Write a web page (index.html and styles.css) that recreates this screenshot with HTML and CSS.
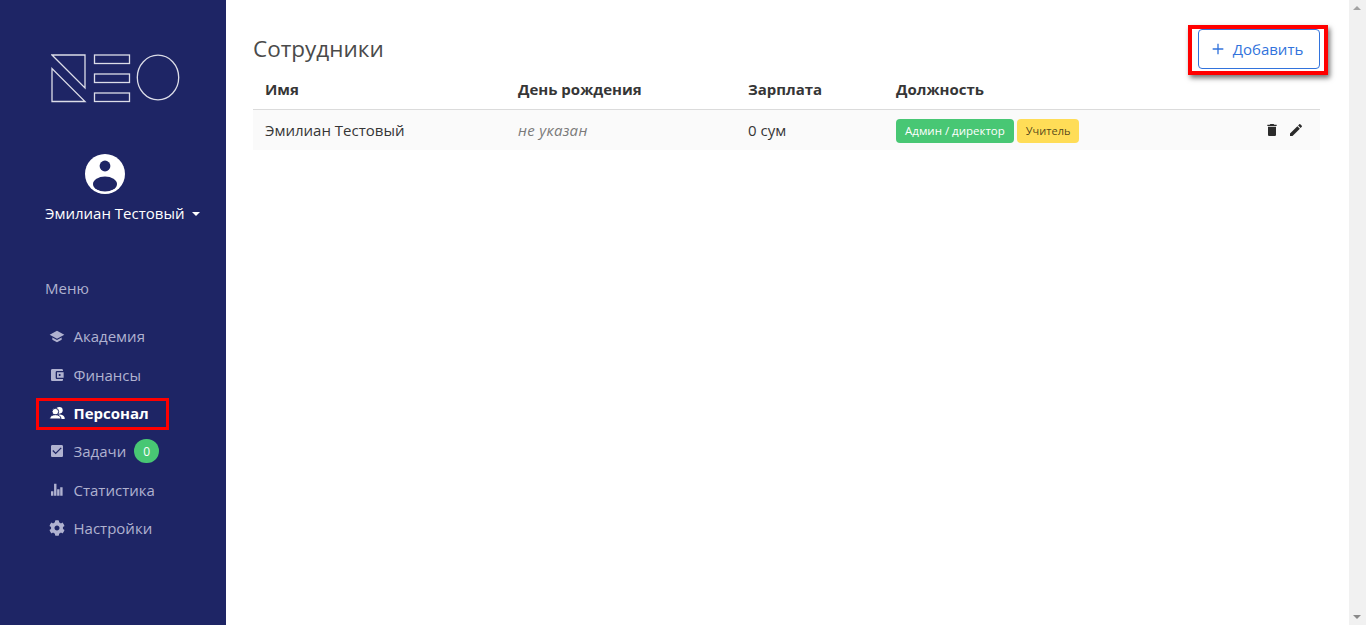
FILE: index.html
```html
<!DOCTYPE html>
<html lang="ru">
<head>
<meta charset="utf-8">
<title>Сотрудники</title>
<link rel="stylesheet" href="styles.css">
</head>
<body>
<div class="app">
  <aside class="sidebar">
    <svg class="logo" width="130" height="50" viewBox="0 0 130 50" fill="none" stroke="currentColor" stroke-width="1.3">
      <path d="M1 1H34V34Z"/>
      <path d="M1 14.5V47.5H34Z"/>
      <rect x="43.5" y="1" width="35" height="8.5"/>
      <rect x="43.5" y="20" width="35" height="8.5"/>
      <rect x="43.5" y="39" width="35" height="8.5"/>
      <ellipse cx="107" cy="23.5" rx="20.7" ry="22.3"/>
    </svg>
    <svg class="avatar" width="40" height="40" viewBox="0 0 40 40">
      <circle cx="20" cy="20" r="20" fill="#fff"/>
      <circle cx="20" cy="12" r="5.4" fill="#1e2565"/>
      <ellipse cx="20" cy="30" rx="12" ry="7.5" fill="#1e2565"/>
    </svg>
    <div class="user">Эмилиан Тестовый<span class="caret"></span></div>
    <div class="menu-label">Меню</div>
    <nav class="menu">
      <a class="menu-item">
        <svg class="menu-icon" viewBox="0 0 24 24"><path d="M12 4L1 10l11 6 11-6-11-6zM5 14.2v3.6L12 21.5l7-3.7v-3.6L12 18l-7-3.8z"/></svg>
        Академия
      </a>
      <a class="menu-item">
        <svg class="menu-icon" viewBox="0 0 24 24"><path d="M21 18v1c0 1.1-.9 2-2 2H5c-1.11 0-2-.9-2-2V5c0-1.1.89-2 2-2h14c1.1 0 2 .9 2 2v1h-9c-1.11 0-2 .9-2 2v8c0 1.1.89 2 2 2h9zm-9-2h10V8H12v8zm4-2.5c-.83 0-1.5-.67-1.5-1.5s.67-1.5 1.5-1.5 1.5.67 1.5 1.5-.67 1.5-1.5 1.5z"/></svg>
        Финансы
      </a>
      <a class="menu-item is-active">
        <svg class="menu-icon" viewBox="0 0 24 24">
          <circle cx="15.500" cy="8" r="5"/>
          <path d="M14 14.500c4.500-.5 9.500 1.500 9.500 5.500v1H16z"/>
          <circle class="cut" cx="9.500" cy="10" r="5"/>
          <path class="cut" d="M1 21c0-4.500 4-6.500 8.500-6.500S18 16.500 18 21z"/>
        </svg>
        Персонал
      </a>
      <a class="menu-item">
        <svg class="menu-icon" viewBox="0 0 24 24"><path d="M19 3H5c-1.11 0-2 .9-2 2v14c0 1.1.89 2 2 2h14c1.110 0 2-.9 2-2V5c0-1.100-.89-2-2-2zm-9 14l-5-5 1.410-1.410L10 14.170l7.590-7.590L19 8l-9 9z"/></svg>
        Задачи
        <span class="count">0</span>
      </a>
      <a class="menu-item">
        <svg class="menu-icon" viewBox="0 0 24 24"><path d="M3 14h3.600v6.500H3zM7.600 2.500h3.600v18H7.600zM12.200 11h3.600v9.500h-3.600zM16.800 8h3.600v12.500h-3.600z"/></svg>
        Статистика
      </a>
      <a class="menu-item">
        <svg class="menu-icon" viewBox="0 0 512 512"><path d="M487.4 315.7l-42.6-24.6c4.3-23.2 4.3-47 0-70.2l42.6-24.6c4.9-2.8 7.1-8.6 5.5-14-11.1-35.6-30-67.8-54.7-94.6-3.8-4.1-10-5.1-14.8-2.3L380.8 110c-17.9-15.4-38.5-27.3-60.8-35.1V25.8c0-5.6-3.9-10.5-9.4-11.7-36.7-8.2-74.3-7.8-109.2 0-5.5 1.2-9.4 6.1-9.4 11.7V75c-22.2 7.9-42.8 19.8-60.8 35.1L88.7 85.5c-4.9-2.8-11-1.9-14.8 2.3-24.7 26.7-43.6 58.9-54.7 94.6-1.7 5.4.6 11.2 5.5 14L67.3 221c-4.3 23.2-4.3 47 0 70.2l-42.6 24.6c-4.9 2.8-7.1 8.6-5.5 14 11.1 35.6 30 67.8 54.7 94.6 3.8 4.1 10 5.1 14.8 2.3l42.6-24.6c17.9 15.4 38.5 27.3 60.8 35.1v49.2c0 5.6 3.9 10.5 9.4 11.7 36.7 8.2 74.3 7.8 109.2 0 5.5-1.2 9.4-6.1 9.4-11.7v-49.2c22.2-7.9 42.8-19.8 60.8-35.1l42.6 24.6c4.9 2.8 11 1.9 14.8-2.3 24.7-26.7 43.6-58.9 54.7-94.6 1.5-5.5-.7-11.3-5.6-14.1zM256 336c-44.1 0-80-35.9-80-80s35.9-80 80-80 80 35.9 80 80-35.9 80-80 80z"/></svg>
        Настройки
      </a>
    </nav>
    <div class="mark mark-menu"></div>
  </aside>
  <main class="main">
    <header class="head">
      <h1 class="title">Сотрудники</h1>
      <button class="add">
        <svg class="add-icon" viewBox="0 0 24 24"><path d="M20 13h-7v7h-2v-7H4v-2h7V4h2v7h7v2z"/></svg>
        Добавить
      </button>
      <div class="mark mark-add"></div>
    </header>
    <table class="table">
      <colgroup>
        <col class="col-name"><col class="col-birth"><col class="col-pay"><col class="col-role"><col>
      </colgroup>
      <thead>
        <tr><th>Имя</th><th>День рождения</th><th>Зарплата</th><th>Должность</th><th></th></tr>
      </thead>
      <tbody>
        <tr>
          <td>Эмилиан Тестовый</td>
          <td class="muted">не указан</td>
          <td>0 сум</td>
          <td><div class="tags"><span class="tag tag-green">Админ / директор</span><span class="tag tag-yellow">Учитель</span></div></td>
          <td class="actions">
            <svg class="action" viewBox="0 0 24 24"><path d="M6 19c0 1.100.9 2 2 2h8c1.100 0 2-.9 2-2V7H6v12zM19 4h-3.500l-1-1h-5l-1 1H5v2h14V4z"/></svg>
            <svg class="action" viewBox="0 0 24 24"><path d="M3 17.250V21h3.750L17.810 9.940l-3.750-3.750L3 17.250zM20.710 7.040c.39-.39.39-1.020 0-1.410l-2.340-2.340c-.39-.39-1.020-.39-1.410 0l-1.830 1.830 3.750 3.750 1.830-1.830z"/></svg>
          </td>
        </tr>
      </tbody>
    </table>
  </main>
  <div class="scrollbar"><span class="arrow-up"></span><span class="arrow-down"></span></div>
</div>
</body>
</html>
```
FILE: styles.css
```css
* { box-sizing: border-box; }
html, body { margin: 0; height: 100%; overflow: hidden; }
body { font-family: "Open Sans", "Noto Sans", sans-serif; font-size: 15px; color: #363636; background: #fff; }
.app { display: flex; height: 625px; }

.sidebar { position: relative; flex: 0 0 226px; background: #1e2565; display: flex; flex-direction: column; align-items: flex-start; color: #fff; }
.logo { margin: 54px 0 0 51px; color: #dcdde8; }
.avatar { margin: 50px 0 0 85px; }
.user { margin: 8px 0 0 45px; font-size: 15px; line-height: 22px; white-space: nowrap; color: #fff; }
.caret { display: inline-block; margin-left: 8px; vertical-align: 3px; border-left: 4.500px solid transparent; border-right: 4.500px solid transparent; border-top: 4.500px solid #fff; }
.menu-label { margin: 53px 0 0 45px; font-size: 15px; line-height: 22px; color: #b0b2d0; }
.menu { margin-top: 18px; display: flex; flex-direction: column; width: 100%; }
.menu-item { display: flex; align-items: center; height: 38.400px; padding-left: 49px; color: #b0b2d0; font-size: 15px; white-space: nowrap; }
.menu-icon { width: 16px; height: 16px; margin-right: 8.500px; fill: currentColor; flex: none; }
.menu-item.is-active { color: #fff; font-weight: 700; }
.cut { stroke: #1e2565; stroke-width: 1.500px; }
.count { display: flex; align-items: center; justify-content: center; width: 25px; height: 24px; margin-left: 8px; border-radius: 12px; background: #48c774; color: #fff; font-size: 12px; }

.mark { position: absolute; border: 3px solid #f00; pointer-events: none; }
.mark-menu { left: 36px; top: 398px; width: 133px; height: 32px; }
.mark-add { right: -8px; top: -4px; width: 140px; height: 50px; border-width: 4px; box-shadow: 2px 3px 5px rgba(0, 0, 0, .55); }

.main { flex: 1; min-width: 0; padding: 29px 29px 0 27px; background: #fff; }
.head { position: relative; display: flex; justify-content: space-between; align-items: center; height: 40px; }
.title { margin: 0; font-size: 22.500px; font-weight: 400; line-height: 40px; color: #4a4a4a; }
.add { display: flex; align-items: center; justify-content: center; width: 122px; height: 40px; padding: 0 5px 0 0; background: #fff; border: 1px solid #3273dc; border-radius: 4px; color: #3273dc; font: inherit; font-size: 15px; }
.add-icon { width: 16px; height: 16px; margin-right: 7px; fill: currentColor; }

.table { width: 100%; border-collapse: collapse; table-layout: fixed; }
.col-name { width: 253px; }
.col-birth { width: 230px; }
.col-pay { width: 148px; }
.col-role { width: 240px; }
.table th { height: 40px; padding: 0 12px; text-align: left; font-weight: 700; font-size: 15px; color: #363636; border-bottom: 1px solid #dbdbdb; }
.table td { height: 41px; padding: 0 12px; background: #fafafa; white-space: nowrap; font-size: 15px; }
.table .muted { font-style: italic; color: #7a7a7a; letter-spacing: .3px; }
.tags { display: flex; gap: 3px; align-items: center; margin-top: 2px; }
.tag { display: inline-flex; align-items: center; height: 24px; padding: 0 9px; border-radius: 4px; font-size: 11px; }
.tag-green { background: #48c774; color: #fff; font-size: 11.500px; }
.tag-yellow { background: #ffdd57; color: rgba(0, 0, 0, .7); }
.table .actions { padding: 0 16px 0 0; text-align: right; font-size: 0; }
.action { width: 16px; height: 16px; fill: #2b2b2b; margin-left: 8px; vertical-align: middle; }

.scrollbar { position: relative; flex: 0 0 17px; background: #f1f1f1; }
.arrow-down { position: absolute; left: 4px; bottom: 6px; border-left: 4px solid transparent; border-right: 4px solid transparent; border-top: 4px solid #8a8a8a; }
.arrow-up { position: absolute; left: 4px; top: 6px; border-left: 4px solid transparent; border-right: 4px solid transparent; border-bottom: 4px solid #a3a3a3; }
```
